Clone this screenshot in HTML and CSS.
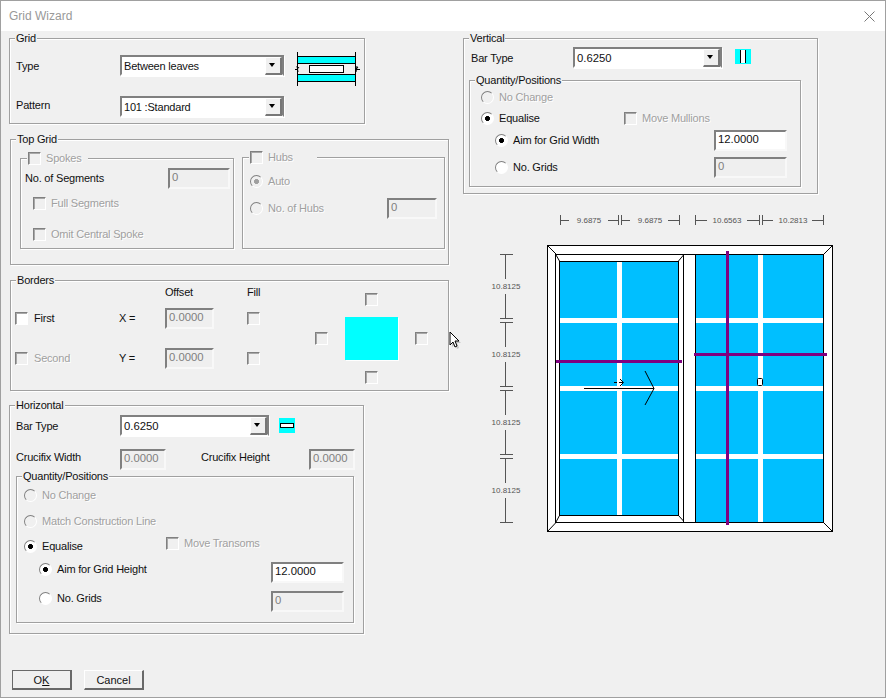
FILE: index.html
```html
<!DOCTYPE html>
<html lang="en">
<head>
    <meta charset="UTF-8">
    <title>Grid Wizard</title>
    <link rel="stylesheet" href="styles.css">
</head>
<body>
<div class="window">
    <div class="titlebar">
        <span>Grid Wizard</span>
        <svg class="close" width="11" height="11" viewBox="0 0 11 11"><path d="M0.5 0.5L10.5 10.5M10.5 0.5L0.5 10.5" stroke="#777" fill="none"/></svg>
    </div>

    <div class="dialog">
        <!-- left column -->
        <div class="col-left">
            <div class="group grid-group">
                <div class="title">Grid</div>
                <span>Type</span>
                <div class="combo"><span>Between leaves</span><i class="arrow"></i></div>
                <svg class="glass-icon" width="66" height="36" viewBox="295 52 66 36">
                    <rect x="297" y="56" width="59" height="8" fill="#0ff"/>
                    <rect x="297" y="74" width="59" height="8" fill="#0ff"/>
                    <path d="M297 56.5H356M297 63.5H356M297 74.5H356M297 81.5H356M297.5 52V86M355.5 52V86" stroke="#000" fill="none"/>
                    <rect x="309.5" y="65.5" width="34" height="7" fill="#fff" stroke="#000"/>
                    <path d="M295 69.5H297L299 67M297 66L298 72M358 67L356 69.5H360M357 66L356 72" stroke="#000" fill="none"/>
                </svg>
                <span class="pattern-label">Pattern</span>
                <div class="combo"><span>101 :Standard</span><i class="arrow"></i></div>
            </div>

            <div class="group top-group">
                <div class="title">Top Grid</div>
                <div class="group spokes">
                    <div class="title title-check"><i class="check"></i><span class="off">Spokes</span></div>
                    <div class="row between">
                        <span>No. of Segments</span>
                        <div class="field seg-field">0</div>
                    </div>
                    <div class="row indent"><i class="check"></i><span class="off">Full Segments</span></div>
                    <div class="row indent"><i class="check"></i><span class="off">Omit Central Spoke</span></div>
                </div>
                <div class="group hubs">
                    <div class="title title-check"><i class="check"></i><span class="off">Hubs</span></div>
                    <div class="row"><i class="radio dim-on"></i><span class="off">Auto</span></div>
                    <div class="row between">
                        <div class="row"><i class="radio"></i><span class="off">No. of Hubs</span></div>
                        <div class="field hub-field">0</div>
                    </div>
                </div>
            </div>

            <div class="group borders">
                <div class="title">Borders</div>
                <div class="border-table">
                    <span></span><span></span><span>Offset</span><span>Fill</span>
                    <div class="row"><i class="check live"></i><span>First</span></div>
                    <span>X =</span>
                    <div class="field offset-field">0.0000</div>
                    <i class="check"></i>
                    <div class="row"><i class="check"></i><span class="off">Second</span></div>
                    <span>Y =</span>
                    <div class="field offset-field">0.0000</div>
                    <i class="check"></i>
                </div>
                <div class="border-preview">
                    <i class="check side-top"></i>
                    <i class="check side-left"></i>
                    <div class="preview-square"></div>
                    <i class="check side-right"></i>
                    <i class="check side-bottom"></i>
                </div>
            </div>

            <div class="group horizontal">
                <div class="title">Horizontal</div>
                <div class="row bar-row">
                    <span class="bar-label">Bar Type</span>
                    <div class="combo combo-short"><span>0.6250</span><i class="arrow"></i></div>
                    <svg class="swatch" width="16" height="15" viewBox="0 0 16 15">
                        <rect width="16" height="15" fill="#0ff"/>
                        <rect x="1.5" y="5.5" width="13" height="4" fill="#fff" stroke="#000"/>
                    </svg>
                </div>
                <div class="row crucifix-row">
                    <span class="bar-label">Crucifix Width</span>
                    <div class="field crucifix-field">0.0000</div>
                    <span class="crucifix-height">Crucifix Height</span>
                    <div class="field crucifix-field">0.0000</div>
                </div>
                <div class="group qty qty-h">
                    <div class="title">Quantity/Positions</div>
                    <div class="row"><i class="radio"></i><span class="off">No Change</span></div>
                    <div class="row"><i class="radio"></i><span class="off">Match Construction Line</span></div>
                    <div class="row">
                        <i class="radio live on"></i><span class="equalise-h">Equalise</span>
                        <div class="row lifted"><i class="check"></i><span class="off">Move Transoms</span></div>
                    </div>
                    <div class="row between sub">
                        <div class="row"><i class="radio live on"></i><span>Aim for Grid Height</span></div>
                        <div class="field qty-field live">12.0000</div>
                    </div>
                    <div class="row between sub">
                        <div class="row"><i class="radio live"></i><span>No. Grids</span></div>
                        <div class="field qty-field">0</div>
                    </div>
                </div>
            </div>

            <div class="buttons">
                <button class="btn btn-default">O<u>K</u></button>
                <button class="btn">Cancel</button>
            </div>
        </div>

        <!-- right column -->
        <div class="col-right">
            <div class="group vertical">
                <div class="title">Vertical</div>
                <div class="row bar-row-v">
                    <span class="bar-label-v">Bar Type</span>
                    <div class="combo combo-short"><span>0.6250</span><i class="arrow"></i></div>
                    <svg class="swatch-v" width="16" height="15" viewBox="0 0 16 15">
                        <rect width="16" height="15" fill="#0ff"/>
                        <rect x="5.5" y="1" width="5" height="13" fill="#fff"/>
                        <path d="M5.5 1V14M10.5 1V14" stroke="#000" fill="none"/>
                    </svg>
                </div>
                <div class="group qty qty-v">
                    <div class="title">Quantity/Positions</div>
                    <div class="row"><i class="radio"></i><span class="off">No Change</span></div>
                    <div class="row">
                        <i class="radio live on"></i><span class="equalise-v">Equalise</span>
                        <i class="check"></i><span class="off">Move Mullions</span>
                    </div>
                    <div class="row between sub">
                        <div class="row"><i class="radio live on"></i><span>Aim for Grid Width</span></div>
                        <div class="field qty-field live">12.0000</div>
                    </div>
                    <div class="row between sub">
                        <div class="row"><i class="radio live"></i><span>No. Grids</span></div>
                        <div class="field qty-field">0</div>
                    </div>
                </div>
            </div>

            <!-- window drawing with its dimension lines -->
            <svg class="drawing" width="345" height="323" viewBox="490 212 345 323">
                <g stroke="#555" fill="none">
                    <path d="M560.5 215V225M560 220.5H569M608 220.5H618M618.5 215V225M621.5 215V225M621 220.5H630M668 220.5H679M679.5 215V225"/>
                    <path d="M695.5 215V225M695 220.5H707M747 220.5H759M759.5 215V225M762.5 215V225M762 220.5H773M812 220.5H823M823.5 215V225"/>
                    <path d="M505.5 254V279M505.5 294V318M505.5 323V347M505.5 362V386M505.5 390V415M505.5 430V454M505.5 459V483M505.5 498V522"/>
                    <path d="M500 254.5H513M500 318.5H513M500 322.5H513M500 386.5H513M500 390.5H513M500 454.5H513M500 458.5H513M500 522.5H513"/>
                </g>
                <g class="dim">
                    <text x="589" y="223">9.6875</text>
                    <text x="650" y="223">9.6875</text>
                    <text x="727" y="223">10.6563</text>
                    <text x="793" y="223">10.2813</text>
                    <text x="506" y="289">10.8125</text>
                    <text x="506" y="357">10.8125</text>
                    <text x="506" y="425">10.8125</text>
                    <text x="506" y="493">10.8125</text>
                </g>

                <rect x="547.5" y="245.5" width="285" height="286" fill="#fff" stroke="#000"/>
                <path d="M547.5 245.5L556 254M832.5 245.5L823.5 254.5M547.5 531.5L556 522.5M832.5 531.5L823.5 522.5" stroke="#000" fill="none"/>

                <rect x="695.5" y="254.5" width="128" height="268" fill="#00bfff" stroke="#000"/>
                <rect x="555.5" y="254.5" width="128" height="268" fill="#fff" stroke="#000"/>
                <rect x="559.5" y="261.5" width="119" height="254" fill="#00bfff" stroke="#000"/>
                <path d="M678.5 261L683.5 255M678.5 515.5L683.5 521M559.5 261L556 255M559.5 515.5L556 522M556 254.5H823M556 522.5H823" stroke="#000" fill="none"/>

                <g fill="#fff">
                    <rect x="617" y="262" width="5" height="253"/>
                    <rect x="560" y="318" width="118" height="5"/>
                    <rect x="560" y="386" width="118" height="5"/>
                    <rect x="560" y="454" width="118" height="5"/>
                    <rect x="758" y="255" width="5" height="267"/>
                    <rect x="696" y="318" width="127" height="5"/>
                    <rect x="696" y="386" width="127" height="5"/>
                    <rect x="696" y="454" width="127" height="5"/>
                </g>

                <g fill="#800080">
                    <rect x="556" y="360" width="126" height="3"/>
                    <rect x="694" y="353" width="133" height="3"/>
                    <rect x="726" y="251" width="3" height="274"/>
                </g>

                <g stroke="#000" fill="none">
                    <path d="M584 388.5H654M645 371L654 388.5L645 405"/>
                    <path d="M614 382.5H617M619 382.5H623M620 379L623.5 382.5L620 386"/>
                    <rect x="757.5" y="378.5" width="5" height="7" rx="1" fill="#fff"/>
                </g>
            </svg>
        </div>

        <svg class="cursor" width="14" height="19" viewBox="0 0 14 19">
            <path d="M3 3V16L6 13L8 18L10 17L8 12H12Z" fill="#999" opacity="0.5"/>
            <path d="M1 1V14L4 11L6 16L8 15L6 10H10Z" fill="#fff" stroke="#000"/>
        </svg>
    </div>
</div>
</body>
</html>
```

FILE: styles.css
```css
/* CSS styles */
* {
    box-sizing: border-box;
}

body {
    margin: 0;
    font-family: "Liberation Sans", Arial, sans-serif;
    font-size: 11px;
    letter-spacing: -0.2px;
    color: #111;
    background-color: #f0f0f0;
}

i {
    display: block;
    flex: none;
}

/* window frame */
.window {
    width: 886px;
    height: 698px;
    border: 1px solid #a0a0a0;
    display: flex;
    flex-direction: column;
}

.titlebar {
    height: 30px;
    flex: none;
    background-color: #fff;
    padding: 0 10px 0 8px;
    display: flex;
    align-items: center;
    justify-content: space-between;
    font-size: 12px;
    letter-spacing: 0;
    color: #999;
}

.dialog {
    flex: 1;
    position: relative;
    display: flex;
    background-color: #f0f0f0;
}

.col-left {
    width: 462px;
    flex: none;
    padding: 7px 0 0 8px;
}

.col-right {
    padding-top: 7px;
}

/* group box */
.group {
    position: relative;
    border: 1px solid #a0a0a0;
    box-shadow: 1px 1px 0 #fff, inset 1px 1px 0 #fff;
}

.title {
    position: absolute;
    top: -8px;
    left: 5px;
    line-height: 14px;
    padding: 0 1px;
    background-color: #f0f0f0;
}

.title-check {
    display: flex;
    align-items: center;
    gap: 5px;
    padding-right: 6px;
}

.off {
    color: #a0a0a0;
    text-shadow: 1px 1px 0 #fff;
}

.row {
    display: flex;
    align-items: center;
    gap: 5px;
}

.between {
    justify-content: space-between;
}

/* controls */
.combo {
    height: 21px;
    border: 2px solid;
    border-color: #808080 #808080 #fff #808080;
    background-color: #fff;
    padding-left: 2px;
    display: flex;
    align-items: center;
    justify-content: space-between;
    box-shadow: 1px 1px 0 #fff;
}

.arrow {
    width: 17px;
    height: 18px;
    margin-bottom: -1px;
    background-color: #f0f0f0;
    border: 1px solid;
    border-color: #fff #777 #777 #fff;
    border-width: 1px 2px 2px 1px;
    position: relative;
}

.arrow::after {
    content: "";
    position: absolute;
    left: 3px;
    top: 5px;
    border-style: solid;
    border-width: 4px 3.5px 0 3.5px;
    border-color: #000 transparent transparent transparent;
}

.field {
    height: 21px;
    flex: none;
    border: 2px solid;
    border-color: #808080 #f8f8f8 #f8f8f8 #808080;
    background-color: #efefef;
    color: #808080;
    padding-left: 2px;
    font-size: 11.3px;
    letter-spacing: 0;
    line-height: 14px;
}

.field.live {
    background-color: #fff;
    color: #111;
}

.check {
    width: 13px;
    height: 13px;
    border: 1px solid;
    border-color: #808080 #fff #fff #808080;
    background-color: #f0f0f0;
    box-shadow: inset 1px 1px 0 #a8a8a8;
}

.check.live {
    background-color: #fff;
}

.radio {
    width: 13px;
    height: 13px;
    border-radius: 50%;
    border: 1px solid;
    border-color: #808080 #fff #fff #808080;
    background-color: #f0f0f0;
}

.radio.live {
    background-color: #fff;
}

.radio.on {
    background: radial-gradient(circle, #000 2.2px, #fff 2.8px);
}

.radio.dim-on {
    background: radial-gradient(circle, #a0a0a0 2.2px, #f0f0f0 2.8px);
}

/* Grid */
.grid-group {
    width: 356px;
    height: 86px;
    padding: 16px 0 0 6px;
    display: grid;
    grid-template-columns: 104px 164px auto;
    grid-template-rows: 21px 21px;
    row-gap: 20px;
    align-items: center;
}

.pattern-label {
    margin-top: -3px;
}

.glass-icon {
    grid-column: 3;
    grid-row: 1 / span 2;
    align-self: start;
    margin: -3px 0 0 11px;
}

/* Top Grid */
.top-group {
    width: 439px;
    height: 126px;
    margin: 15px 0 0 1px;
    padding: 18px 0 0 9px;
    display: flex;
    align-items: flex-start;
    gap: 8px;
}

.spokes {
    width: 214px;
    height: 91px;
    padding: 7px 3px 0 4px;
    display: grid;
    grid-template-rows: 24px 26px 36px;
}

.spokes .title-check {
    left: 6px;
}

.seg-field {
    width: 62px;
}

.indent {
    padding-left: 8px;
}

.hubs {
    width: 203px;
    height: 92px;
    margin-top: -1px;
    padding: 10px 7px 0 7px;
    display: grid;
    grid-template-rows: 26px 28px;
    align-items: center;
}

.hubs .title-check {
    left: 6px;
    padding-right: 24px;
}

.hub-field {
    width: 50px;
}

/* Borders */
.borders {
    width: 439px;
    height: 111px;
    margin: 15px 0 0 1px;
    padding: 4px 0 0 4px;
    display: flex;
    align-items: flex-start;
}

.border-table {
    display: grid;
    grid-template-columns: 104px 46px 82px 13px;
    grid-template-rows: 14px 38px 42px;
    align-items: center;
}

.border-table .row {
    gap: 6px;
}

.offset-field {
    width: 49px;
}

.border-preview {
    margin: 8px 0 0 55px;
    display: grid;
    grid-template-columns: 13px 53px 13px;
    grid-template-rows: 13px 43px 13px;
    column-gap: 17px;
    row-gap: 11px;
    align-items: center;
}

.side-top {
    grid-row: 1;
    grid-column: 2;
    justify-self: center;
}

.side-left {
    grid-row: 2;
    grid-column: 1;
}

.preview-square {
    grid-row: 2;
    grid-column: 2;
    height: 43px;
    background-color: #0ff;
    box-shadow: 1px 1px 0 #fff;
}

.side-right {
    grid-row: 2;
    grid-column: 3;
}

.side-bottom {
    grid-row: 3;
    grid-column: 2;
    justify-self: center;
}

/* Horizontal */
.horizontal {
    width: 355px;
    height: 229px;
    margin-top: 14px;
    padding: 9px 0 0 6px;
}

.bar-row {
    gap: 0;
    height: 21px;
}

.bar-label {
    width: 104px;
    flex: none;
}

.combo-short {
    width: 149px;
    flex: none;
    font-size: 11.3px;
    letter-spacing: 0;
}

.swatch {
    margin-left: 10px;
}

.crucifix-row {
    gap: 0;
    height: 21px;
    margin-top: 13px;
}

.crucifix-row span {
    margin-top: -5px;
}

.crucifix-field {
    width: 46px;
}

.crucifix-height {
    width: 108px;
    margin-left: 35px;
}

.qty {
    padding-left: 7px;
}

.qty-h {
    width: 338px;
    height: 147px;
    margin: 6px 0 0 0;
    padding-top: 9px;
    padding-right: 9px;
    display: grid;
    grid-template-rows: 18px 34px 16px 30px 28px;
}

.equalise-h {
    width: 119px;
}

.lifted {
    margin-top: -6px;
}

.sub {
    padding-left: 15px;
}

.sub .field {
    margin-top: 6px;
}

.qty-field {
    width: 73px;
}

/* buttons */
.buttons {
    display: flex;
    gap: 12px;
    margin: 36px 0 0 3px;
}

.btn {
    width: 60px;
    height: 20px;
    padding: 0;
    font: inherit;
    letter-spacing: 0;
    color: #111;
    background-color: #f0f0f0;
    border: 1px solid;
    border-width: 1px 2px 2px 1px;
    border-color: #fff #696969 #696969 #fff;
}

.btn-default {
    border-color: #696969;
}

/* Vertical */
.vertical {
    width: 355px;
    height: 156px;
    padding: 8px 0 0 7px;
}

.bar-label-v {
    width: 102px;
    flex: none;
}

.bar-row-v {
    gap: 0;
    height: 21px;
}

.swatch-v {
    margin-left: 13px;
    margin-top: -3px;
}

.qty-v {
    width: 332px;
    height: 107px;
    margin: 12px 0 0 -2px;
    padding: 7px 13px 0 11px;
    display: grid;
    grid-template-rows: 18px 24px 20px 34px;
}

.qty-v .sub {
    padding-left: 14px;
}

.qty-v .sub .field {
    margin-top: 0;
}

.equalise-v {
    width: 120px;
}

.drawing {
    display: block;
    margin: 18px 0 0 27px;
}

.dim text {
    font-size: 8px;
    letter-spacing: 0;
    fill: #555;
    text-anchor: middle;
}

/* mouse pointer left over the dialog */
.cursor {
    position: absolute;
    left: 448px;
    top: 300px;
}
```
